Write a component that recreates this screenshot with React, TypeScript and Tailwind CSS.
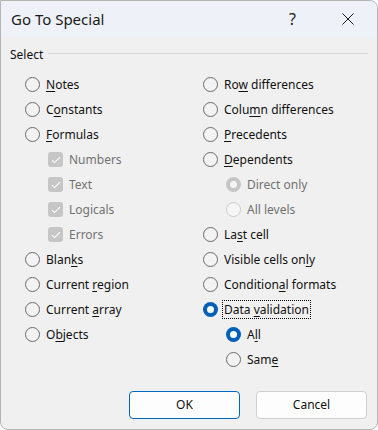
import { ReactNode } from 'react';

const font = { fontFamily: '"Noto Sans", "Liberation Sans", sans-serif' };

type Opt = { label: string; key?: number; state?: 'off' | 'on' | 'disOff' | 'disOn'; indent?: boolean; focus?: boolean; check?: boolean };

const Label = ({ label, k }: { label: string; k?: number }) => {
    if (k === undefined) return <>{label}</>;
    return (
        <>
            {label.slice(0, k)}
            <span className="underline underline-offset-2">{label[k]}</span>
            {label.slice(k + 1)}
        </>
    );
};

const Radio = ({ state }: { state: Opt['state'] }) => {
    if (state === 'on')
        return (
            <span className="flex h-[15px] w-[15px] shrink-0 items-center justify-center rounded-full bg-[#005fb8]">
                <span className="h-[7px] w-[7px] rounded-full bg-white" />
            </span>
        );
    if (state === 'disOn')
        return (
            <span className="flex h-[15px] w-[15px] shrink-0 items-center justify-center rounded-full bg-[#c5c5c5]">
                <span className="h-[7px] w-[7px] rounded-full bg-[#f4f4f4]" />
            </span>
        );
    if (state === 'disOff')
        return <span className="h-[15px] w-[15px] shrink-0 rounded-full border border-[#cbcbcb] bg-[#f6f6f6]" />;
    return <span className="h-[15px] w-[15px] shrink-0 rounded-full border border-[#6a6a6a] bg-[#f3f3f3]" />;
};

const Check = () => (
    <span className="flex h-[15px] w-[15px] shrink-0 items-center justify-center rounded-[3px] bg-[#c6c6c6]">
        <svg width="10" height="8" viewBox="0 0 10 8" fill="none">
            <path d="M1 4.2 L3.6 6.6 L9 1.2" stroke="white" strokeWidth="1.1" />
        </svg>
    </span>
);

const Row = ({ o }: { o: Opt }) => {
    const disabled = o.state === 'disOff' || o.state === 'disOn' || o.check;
    let content: ReactNode = <Label label={o.label} k={o.key} />;
    if (o.focus) content = <span className="-mx-[2px] border border-dotted border-black px-[1px] py-[0px]">{content}</span>;
    return (
        <div className={`flex h-[25px] items-center ${o.indent ? 'pl-[23px]' : ''}`}>
            {o.check ? <Check /> : <Radio state={o.state} />}
            <span className={`ml-[6px] whitespace-nowrap text-[12px] ${disabled ? 'text-[#727272]' : 'text-[#111]'}`}>{content}</span>
        </div>
    );
};

const left: Opt[] = [
    { label: 'Notes', key: 0 },
    { label: 'Constants', key: 1 },
    { label: 'Formulas', key: 0 },
    { label: 'Numbers', check: true, indent: true },
    { label: 'Text', check: true, indent: true },
    { label: 'Logicals', check: true, indent: true },
    { label: 'Errors', check: true, indent: true },
    { label: 'Blanks', key: 4 },
    { label: 'Current region', key: 8 },
    { label: 'Current array', key: 8 },
    { label: 'Objects', key: 1 },
];

const right: Opt[] = [
    { label: 'Row differences', key: 2 },
    { label: 'Column differences', key: 4 },
    { label: 'Precedents', key: 0 },
    { label: 'Dependents', key: 0 },
    { label: 'Direct only', state: 'disOn', indent: true },
    { label: 'All levels', state: 'disOff', indent: true },
    { label: 'Last cell', key: 2 },
    { label: 'Visible cells only', key: 16 },
    { label: 'Conditional formats', key: 9 },
    { label: 'Data validation', key: 5, state: 'on', focus: true },
    { label: 'All', key: 1, state: 'on', indent: true },
    { label: 'Same', key: 3, indent: true },
];

export default function App() {
    return (
        <div style={font} className="flex h-[430px] w-[378px] flex-col overflow-hidden rounded-tr-[8px] rounded-b-[8px] border border-[#b4b4b4] bg-[#f0f0f0] text-[#111]">
            <div className="flex h-[36px] shrink-0 items-center bg-[#eef1f8] pl-[10px]">
                <span className="text-[15px] text-[#1a1a1a]">Go To Special</span>
                <span className="ml-auto mr-[46px] text-[16px] text-[#1a1a1a]">?</span>
                <svg width="12" height="12" viewBox="0 0 12 12" className="mr-[23px]">
                    <path d="M0.5 0.5 L11.5 11.5 M11.5 0.5 L0.5 11.5" stroke="#1a1a1a" strokeWidth="1" />
                </svg>
            </div>
            <div className="flex h-[35px] shrink-0 items-center pl-[9px] pr-[9px]">
                <span className="text-[12px]">Select</span>
                <span className="ml-[5px] mt-[-2px] h-px flex-1 bg-[#d6d6d6]" />
            </div>
            <div className="grid grid-cols-[178px_1fr] pl-[24px]">
                <div className="flex flex-col">
                    {left.map((o) => (
                        <Row key={o.label} o={o} />
                    ))}
                </div>
                <div className="flex flex-col">
                    {right.map((o) => (
                        <Row key={o.label} o={o} />
                    ))}
                </div>
            </div>
            <div className="mt-[19px] flex justify-end gap-[16px] pr-[10px]">
                <button className="h-[28px] w-[111px] rounded-[4px] border border-[#0067c0] bg-[#fdfdfd] text-[12px]">OK</button>
                <button className="h-[28px] w-[111px] rounded-[4px] border border-[#d0d0d0] bg-[#fdfdfd] text-[12px]">Cancel</button>
            </div>
        </div>
    );
}
